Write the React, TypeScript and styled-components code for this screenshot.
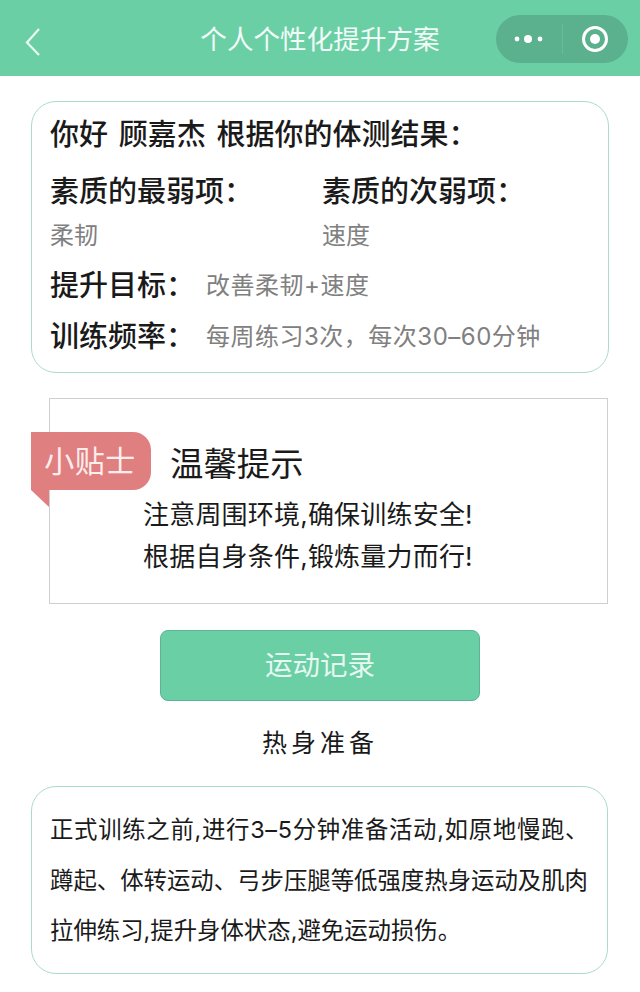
import * as React from 'react';
import styled, { createGlobalStyle } from 'styled-components';

const theme = {
    green: '#6bcfa6',
    greenDark: '#5bb08e',
    line: '#a9dcc9',
    text: '#1a1a1a',
    muted: '#808080',
};

const GlobalStyle = createGlobalStyle`
    html, body {
        margin: 0;
        padding: 0;
        background: #fff;
        font-family: Inter, "Noto Sans CJK SC", sans-serif;
    }
`;

const Page = styled.div`
    width: 640px;
    height: 992px;
    overflow: hidden;
    display: flex;
    flex-direction: column;
    color: ${theme.text};
`;

const NavBar = styled.header`
    height: 76px;
    flex-shrink: 0;
    background: ${theme.green};
    display: flex;
    align-items: center;
    position: relative;
    padding: 0 12px 0 24px;
    box-sizing: border-box;
`;

const BackIcon = styled.svg`
    width: 18px;
    height: 30px;
    margin-top: 8px;
`;

const NavTitle = styled.h1`
    position: absolute;
    left: 0;
    right: 0;
    top: 20px;
    margin: 0;
    text-align: center;
    font-size: 26.6px;
    line-height: 38px;
    font-weight: 400;
    color: #f1fbf7;
`;

const Capsule = styled.div`
    margin-left: auto;
    width: 132px;
    height: 48px;
    margin-top: 2px;
    border-radius: 24px;
    background: ${theme.greenDark};
    display: flex;
    align-items: center;
`;

const CapsulePart = styled.div`
    flex: 1;
    height: 30px;
    display: flex;
    align-items: center;
    justify-content: center;
`;

const CapsuleDivider = styled.div`
    width: 1px;
    height: 30px;
    background: #68bb9a;
`;

const Card = styled.section`
    box-sizing: border-box;
    width: 578px;
    margin-left: 31px;
    border: 1px solid ${theme.line};
    border-radius: 25px;
    background: #fff;
`;

const ResultCard = styled(Card)`
    margin-top: 25px;
    height: 272px;
    padding: 13px 0 0 18px;
`;

const Greeting = styled.div`
    font-size: 29px;
    line-height: 40px;
    font-weight: 500;
    word-spacing: 3px;
    white-space: nowrap;
`;

const Columns = styled.div`
    display: grid;
    grid-template-columns: 272px 1fr;
    margin-top: 18px;
`;

const Label = styled.div`
    font-size: 29px;
    line-height: 38px;
    font-weight: 500;
    white-space: nowrap;
`;

const Value = styled.div`
    font-size: 24px;
    line-height: 34px;
    color: ${theme.muted};
    white-space: nowrap;
    margin-top: 8px;
`;

const Row = styled.div<{ $gap: number }>`
    display: flex;
    align-items: center;
    margin-top: ${(p) => p.$gap}px;
`;

const RowLabel = styled(Label)`
    width: 156px;
`;

const RowValue = styled(Value)`
    margin-top: 0;
    letter-spacing: 0.5px;
`;

const TipsBox = styled.section`
    box-sizing: border-box;
    position: relative;
    width: 559px;
    height: 206px;
    margin: 25px 0 0 49px;
    border: 1px solid #cfcfcf;
    background: #fff;
    padding: 43px 0 0 93px;
`;

const Ribbon = styled.div`
    position: absolute;
    left: -19px;
    top: 33px;
    width: 120px;
    height: 58px;
    box-sizing: border-box;
    padding-right: 2px;
    background: #e07f80;
    border-radius: 0 18px 18px 0;
    color: #fdeeee;
    font-size: 30px;
    line-height: 58px;
    letter-spacing: 0.5px;
    text-align: center;

    &::after {
        content: '';
        position: absolute;
        left: 0;
        top: 58px;
        border-top: 17px solid #e07f80;
        border-left: 18px solid transparent;
    }
`;

const TipsTitle = styled.h2`
    margin: 0 0 0 27px;
    font-size: 33.4px;
    line-height: 44px;
    font-weight: 400;
`;

const TipsLine = styled.p`
    margin: 0;
    font-size: 26px;
    line-height: 42px;
    letter-spacing: 0.2px;
    white-space: nowrap;
`;

const TipsBody = styled.div`
    margin-top: 8px;
`;

const RecordButton = styled.button`
    display: block;
    width: 320px;
    height: 71px;
    margin: 26px 0 0 160px;
    border: 1px solid #5bb594;
    border-radius: 8px;
    background: ${theme.green};
    color: #e6f8f1;
    font-family: inherit;
    font-size: 27.5px;
    padding: 0 0 6px;
`;

const SectionTitle = styled.h3`
    margin: 24px 0 0;
    text-align: center;
    font-size: 25px;
    line-height: 36px;
    font-weight: 400;
    letter-spacing: 4px;
`;

const WarmupCard = styled(Card)`
    width: 577px;
    height: 188px;
    margin-top: 25px;
    padding: 18px 0 0 18px;
`;

const WarmupLine = styled.p<{ $spread?: number }>`
    margin: 0;
    font-size: 23.4px;
    line-height: 50.5px;
    letter-spacing: ${(p) => p.$spread ?? 0}px;
    white-space: nowrap;
`;

export default function App(): JSX.Element {
    return (
        <Page>
            <GlobalStyle />
            <NavBar>
                <BackIcon viewBox="0 0 18 30" fill="none">
                    <path d="M15 2 L3 15.5 L15 28" stroke="#eafaf3" strokeWidth="2.2" />
                </BackIcon>
                <NavTitle>个人个性化提升方案</NavTitle>
                <Capsule>
                    <CapsulePart>
                        <svg width="32" height="10" viewBox="0 0 32 10">
                            <circle cx="4" cy="5" r="2.4" fill="#fff" />
                            <circle cx="15" cy="5" r="4" fill="#fff" />
                            <circle cx="27" cy="5" r="2.4" fill="#fff" />
                        </svg>
                    </CapsulePart>
                    <CapsuleDivider />
                    <CapsulePart>
                        <svg width="28" height="28" viewBox="0 0 28 28">
                            <circle cx="14" cy="14" r="11.5" fill="none" stroke="#fff" strokeWidth="3" />
                            <circle cx="14" cy="14" r="5" fill="#fff" />
                        </svg>
                    </CapsulePart>
                </Capsule>
            </NavBar>

            <ResultCard>
                <Greeting>你好 顾嘉杰 根据你的体测结果：</Greeting>
                <Columns>
                    <div>
                        <Label>素质的最弱项：</Label>
                        <Value>柔韧</Value>
                    </div>
                    <div>
                        <Label>素质的次弱项：</Label>
                        <Value>速度</Value>
                    </div>
                </Columns>
                <Row $gap={14}>
                    <RowLabel>提升目标：</RowLabel>
                    <RowValue>改善柔韧+速度</RowValue>
                </Row>
                <Row $gap={13}>
                    <RowLabel>训练频率：</RowLabel>
                    <RowValue>每周练习3次，每次30–60分钟</RowValue>
                </Row>
            </ResultCard>

            <TipsBox>
                <Ribbon>小贴士</Ribbon>
                <TipsTitle>温馨提示</TipsTitle>
                <TipsBody>
                    <TipsLine>注意周围环境,确保训练安全!</TipsLine>
                    <TipsLine>根据自身条件,锻炼量力而行!</TipsLine>
                </TipsBody>
            </TipsBox>

            <RecordButton>运动记录</RecordButton>
            <SectionTitle>热身准备</SectionTitle>

            <WarmupCard>
                <WarmupLine $spread={0.7}>正式训练之前,进行3–5分钟准备活动,如原地慢跑、</WarmupLine>
                <WarmupLine>蹲起、体转运动、弓步压腿等低强度热身运动及肌肉</WarmupLine>
                <WarmupLine>拉伸练习,提升身体状态,避免运动损伤。</WarmupLine>
            </WarmupCard>
        </Page>
    );
}
